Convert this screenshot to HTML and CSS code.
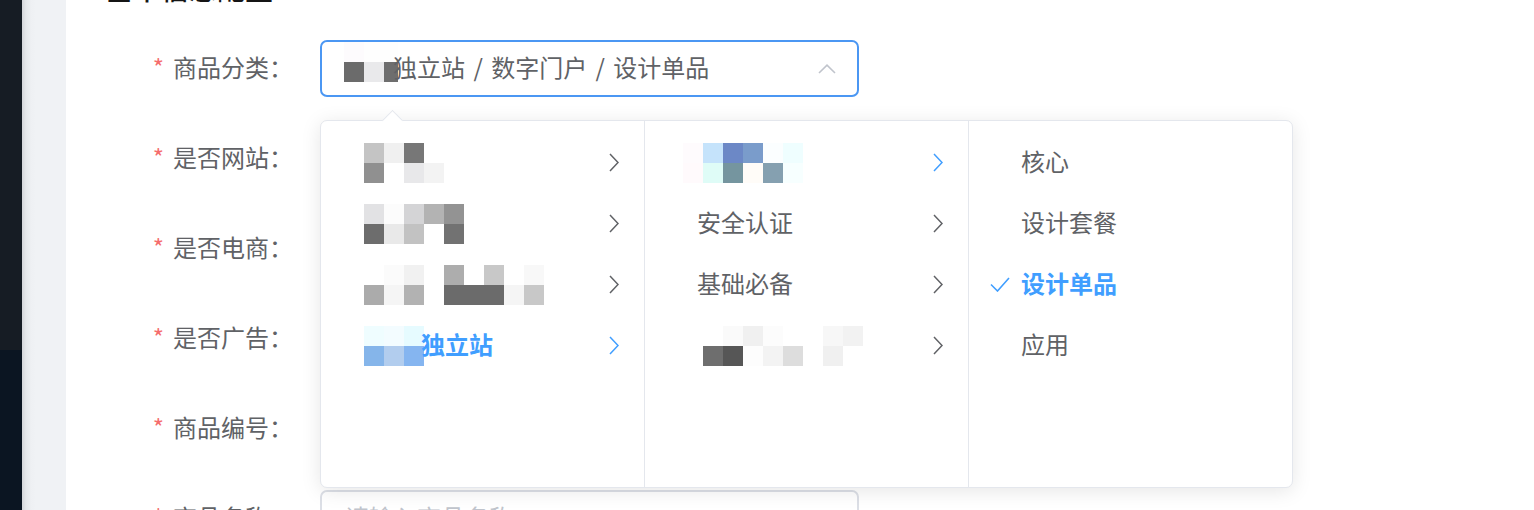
FILE: index.html
```html
<!DOCTYPE html>
<html lang="zh-CN">
<head>
<meta charset="utf-8">
<title>商品信息</title>
<link rel="stylesheet" href="styles.css">
</head>
<body>
<div class="app">
  <aside class="sidebar"><div class="sb-top"></div><div class="sb-bottom"></div></aside>
  <div class="gutter"></div>
  <main class="main">
    <h2 class="title">基本信息配置</h2>
    <form class="form">
      <div class="row">
        <label class="label"><span class="req">*</span>商品分类：</label>
        <div class="select is-focus">
          <span class="value">
            <span class="mosaic input-m">
              <i style="background:#fdfbfd"></i><i style="background:#fefefe"></i><i style="background:#fefefe"></i>
              <i style="background:#6b6b6b"></i><i style="background:#e9e9eb"></i><i style="background:#6e6e6e"></i>
            </span>
            <span class="text path-text">独立站 / 数字门户 / 设计单品</span>
          </span>
          <svg class="chev" width="18" height="10" viewBox="0 0 18 10"><polyline points="1,9 9,1.2 17,9" fill="none" stroke="#c0c4cc" stroke-width="1.6"/></svg>
        </div>
      </div>
      <div class="row">
        <label class="label"><span class="req">*</span>是否网站：</label>
        <div class="select"></div>
      </div>
      <div class="row">
        <label class="label"><span class="req">*</span>是否电商：</label>
        <div class="select"></div>
      </div>
      <div class="row">
        <label class="label"><span class="req">*</span>是否广告：</label>
        <div class="select"></div>
      </div>
      <div class="row">
        <label class="label"><span class="req">*</span>商品编号：</label>
        <div class="select"></div>
      </div>
      <div class="row">
        <label class="label"><span class="req">*</span>商品名称：</label>
        <div class="select"><span class="text placeholder">请输入商品名称</span></div>
      </div>
    </form>

    <div class="cascader">
      <ul class="menu">
        <li class="node">
          <svg class="check" viewBox="0 0 20 15"><polyline points="1,7.5 7.5,14 19,1" fill="none" stroke="currentColor" stroke-width="1.6"/></svg>
          <span class="node-label">
            <span class="mosaic cols-4 m-col1">
              <i style="background:#c4c4c4"></i><i style="background:#f0f0f0"></i><i style="background:#777777"></i><i style="background:#ffffff"></i>
              <i style="background:#909090"></i><i style="background:#ffffff"></i><i style="background:#e8e8ea"></i><i style="background:#f3f3f3"></i>
            </span>
          </span>
          <svg class="arrow" viewBox="0 0 10 19"><polyline points="1,1 9,9.5 1,18" fill="none" stroke="currentColor" stroke-width="1.5"/></svg>
        </li>
        <li class="node">
          <svg class="check" viewBox="0 0 20 15"><polyline points="1,7.5 7.5,14 19,1" fill="none" stroke="currentColor" stroke-width="1.6"/></svg>
          <span class="node-label">
            <span class="mosaic cols-5 m-col1">
              <i style="background:#e2e2e4"></i><i style="background:#fcfcfc"></i><i style="background:#d4d4d6"></i><i style="background:#b3b3b3"></i><i style="background:#939393"></i>
              <i style="background:#6d6d6d"></i><i style="background:#e9e9e9"></i><i style="background:#c2c2c2"></i><i style="background:#ffffff"></i><i style="background:#727272"></i>
            </span>
          </span>
          <svg class="arrow" viewBox="0 0 10 19"><polyline points="1,1 9,9.5 1,18" fill="none" stroke="currentColor" stroke-width="1.5"/></svg>
        </li>
        <li class="node">
          <svg class="check" viewBox="0 0 20 15"><polyline points="1,7.5 7.5,14 19,1" fill="none" stroke="currentColor" stroke-width="1.6"/></svg>
          <span class="node-label">
            <span class="mosaic cols-9 m-col1">
              <i style="background:#ffffff"></i><i style="background:#fbfbfb"></i><i style="background:#f1f1f1"></i><i style="background:#ffffff"></i><i style="background:#adadad"></i><i style="background:#ffffff"></i><i style="background:#c8c8c8"></i><i style="background:#ffffff"></i><i style="background:#f8f8f8"></i>
              <i style="background:#ababab"></i><i style="background:#f5f5f5"></i><i style="background:#b2b2b2"></i><i style="background:#ffffff"></i><i style="background:#6b6b6b"></i><i style="background:#6b6b6b"></i><i style="background:#6b6b6b"></i><i style="background:#f5f5f5"></i><i style="background:#c8c8c8"></i>
            </span>
          </span>
          <svg class="arrow" viewBox="0 0 10 19"><polyline points="1,1 9,9.5 1,18" fill="none" stroke="currentColor" stroke-width="1.5"/></svg>
        </li>
        <li class="node in-path">
          <svg class="check" viewBox="0 0 20 15"><polyline points="1,7.5 7.5,14 19,1" fill="none" stroke="currentColor" stroke-width="1.6"/></svg>
          <span class="node-label">
            <span class="mosaic cols-3 m-col1 m-tight">
              <i style="background:#effdff"></i><i style="background:#f3fcff"></i><i style="background:#e6fbff"></i>
              <i style="background:#85b5ea"></i><i style="background:#b2cdee"></i><i style="background:#85b5f0"></i>
            </span>
            <span class="text">独立站</span>
          </span>
          <svg class="arrow" viewBox="0 0 10 19"><polyline points="1,1 9,9.5 1,18" fill="none" stroke="currentColor" stroke-width="1.5"/></svg>
        </li>
      </ul>
      <ul class="menu">
        <li class="node in-path">
          <svg class="check" viewBox="0 0 20 15"><polyline points="1,7.5 7.5,14 19,1" fill="none" stroke="currentColor" stroke-width="1.6"/></svg>
          <span class="node-label">
            <span class="mosaic cols-6 m-col2a">
              <i style="background:#fefbfd"></i><i style="background:#c5e3fb"></i><i style="background:#6c88c6"></i><i style="background:#7a9ccb"></i><i style="background:#fbfeff"></i><i style="background:#effeff"></i>
              <i style="background:#fffafc"></i><i style="background:#dffcf7"></i><i style="background:#75959f"></i><i style="background:#fffcf8"></i><i style="background:#85a0b0"></i><i style="background:#f7ffff"></i>
            </span>
          </span>
          <svg class="arrow" viewBox="0 0 10 19"><polyline points="1,1 9,9.5 1,18" fill="none" stroke="currentColor" stroke-width="1.5"/></svg>
        </li>
        <li class="node">
          <svg class="check" viewBox="0 0 20 15"><polyline points="1,7.5 7.5,14 19,1" fill="none" stroke="currentColor" stroke-width="1.6"/></svg>
          <span class="node-label"><span class="text">安全认证</span></span>
          <svg class="arrow" viewBox="0 0 10 19"><polyline points="1,1 9,9.5 1,18" fill="none" stroke="currentColor" stroke-width="1.5"/></svg>
        </li>
        <li class="node">
          <svg class="check" viewBox="0 0 20 15"><polyline points="1,7.5 7.5,14 19,1" fill="none" stroke="currentColor" stroke-width="1.6"/></svg>
          <span class="node-label"><span class="text">基础必备</span></span>
          <svg class="arrow" viewBox="0 0 10 19"><polyline points="1,1 9,9.5 1,18" fill="none" stroke="currentColor" stroke-width="1.5"/></svg>
        </li>
        <li class="node">
          <svg class="check" viewBox="0 0 20 15"><polyline points="1,7.5 7.5,14 19,1" fill="none" stroke="currentColor" stroke-width="1.6"/></svg>
          <span class="node-label">
            <span class="mosaic cols-8 m-col2b">
              <i style="background:#ffffff"></i><i style="background:#fafafa"></i><i style="background:#f0f0f0"></i><i style="background:#fcfcfc"></i><i style="background:#ffffff"></i><i style="background:#ffffff"></i><i style="background:#f7f7f7"></i><i style="background:#f2f2f2"></i>
              <i style="background:#6e6e6e"></i><i style="background:#565656"></i><i style="background:#fdfdfd"></i><i style="background:#f3f3f3"></i><i style="background:#dddddd"></i><i style="background:#ffffff"></i><i style="background:#f0f0f0"></i><i style="background:#ffffff"></i>
            </span>
          </span>
          <svg class="arrow" viewBox="0 0 10 19"><polyline points="1,1 9,9.5 1,18" fill="none" stroke="currentColor" stroke-width="1.5"/></svg>
        </li>
      </ul>
      <ul class="menu">
        <li class="node">
          <svg class="check" viewBox="0 0 20 15"><polyline points="1,7.5 7.5,14 19,1" fill="none" stroke="currentColor" stroke-width="1.6"/></svg>
          <span class="node-label"><span class="text">核心</span></span>
        </li>
        <li class="node">
          <svg class="check" viewBox="0 0 20 15"><polyline points="1,7.5 7.5,14 19,1" fill="none" stroke="currentColor" stroke-width="1.6"/></svg>
          <span class="node-label"><span class="text">设计套餐</span></span>
        </li>
        <li class="node active">
          <svg class="check" viewBox="0 0 20 15"><polyline points="1,7.5 7.5,14 19,1" fill="none" stroke="currentColor" stroke-width="1.6"/></svg>
          <span class="node-label"><span class="text">设计单品</span></span>
        </li>
        <li class="node">
          <svg class="check" viewBox="0 0 20 15"><polyline points="1,7.5 7.5,14 19,1" fill="none" stroke="currentColor" stroke-width="1.6"/></svg>
          <span class="node-label"><span class="text">应用</span></span>
        </li>
      </ul>
    </div>
  </main>
</div>
</body>
</html>
```
FILE: styles.css
```css
html, body {
  margin: 0;
  padding: 0;
}
body {
  width: 1534px;
  height: 510px;
  overflow: hidden;
  background: #fff;
  font-family: "Noto Sans CJK SC", "Noto Sans", sans-serif;
}
.app {
  display: flex;
  height: 510px;
}
.sidebar {
  width: 22px;
  display: flex;
  flex-direction: column;
}
.sb-top {
  height: 350px;
  background: #161c24;
}
.sb-bottom {
  flex: 1;
  background: #0b1522;
}
.gutter {
  width: 44px;
  background: linear-gradient(to right, #d4d6da 0, #e6e8eb 4px, #eef0f3 9px, #f0f2f5 14px);
}
.main {
  flex: 1;
  position: relative;
  background: #fff;
  padding-left: 39px;
}
.title {
  margin: -26px 0 38px;
  font-size: 28px;
  line-height: 28px;
  font-weight: 500;
  color: #151515;
}
.form {
  margin: 0;
}
.row {
  display: flex;
  height: 57px;
  margin-bottom: 33px;
}
.label {
  width: 215px;
  box-sizing: border-box;
  padding: 0 27px 4px 0;
  display: flex;
  justify-content: flex-end;
  align-items: center;
  font-size: 24px;
  color: #606266;
}
.req {
  color: #f56c6c;
  margin-right: 9px;
}
.select {
  width: 539px;
  height: 57px;
  box-sizing: border-box;
  border: 2px solid #dcdfe6;
  border-radius: 7px;
  display: flex;
  align-items: center;
  padding: 0 21px 0 23px;
  font-size: 24px;
  color: #606266;
  background: #fff;
}
.select.is-focus {
  border-color: #4b97f3;
}
.value {
  flex: 1;
  display: flex;
  align-self: stretch;
  align-items: center;
}
.text {
  padding-bottom: 4px;
  white-space: nowrap;
}
.path-text {
  word-spacing: 3px;
}
.placeholder {
  color: #c0c4cc;
}
.chev {
  display: block;
}
.mosaic {
  display: grid;
  grid-auto-rows: 20px;
  flex: none;
}
.mosaic i {
  display: block;
}
.input-m {
  grid-template-columns: 20px 20px 14px;
  align-self: flex-start;
  margin-left: -1px;
  margin-right: -5px;
}
.cols-3 { grid-template-columns: repeat(3, 20px); }
.cols-4 { grid-template-columns: repeat(4, 20px); }
.cols-5 { grid-template-columns: repeat(5, 20px); }
.cols-6 { grid-template-columns: repeat(6, 20px); }
.cols-8 { grid-template-columns: repeat(8, 20px); }
.cols-9 { grid-template-columns: repeat(9, 20px); }
.m-col1 { margin-left: -9px; }
.m-tight { margin-right: -3px; }
.m-col2a { margin-left: -14px; }
.m-col2b { margin-left: 6px; }

.cascader {
  position: absolute;
  left: 254px;
  top: 120px;
  width: 973px;
  height: 368px;
  box-sizing: border-box;
  border: 1px solid #e4e7ed;
  border-radius: 7px;
  background: #fff;
  box-shadow: 0 3px 20px rgba(0, 0, 0, 0.1);
  display: flex;
}
.cascader::before {
  content: "";
  position: absolute;
  top: -8px;
  left: 64px;
  width: 14px;
  height: 14px;
  background: #fff;
  border-left: 1px solid #e4e7ed;
  border-top: 1px solid #e4e7ed;
  transform: rotate(45deg);
}
.menu {
  flex: 1;
  list-style: none;
  margin: 0;
  padding: 11px 0;
  border-right: 1px solid #e4e7ed;
}
.menu:last-child {
  border-right: 0;
}
.node {
  height: 61px;
  display: flex;
  align-items: center;
  padding: 0 25px 0 21px;
  font-size: 24px;
  color: #606266;
}
.check {
  width: 20px;
  height: 15px;
  margin-right: 11px;
  flex: none;
  visibility: hidden;
  color: #409eff;
}
.node.active .check {
  visibility: visible;
}
.node-label {
  flex: 1;
  display: flex;
  align-items: center;
  white-space: nowrap;
}
.node.in-path,
.node.active {
  color: #409eff;
  font-weight: 700;
}
.arrow {
  width: 10px;
  height: 19px;
  flex: none;
}
```
